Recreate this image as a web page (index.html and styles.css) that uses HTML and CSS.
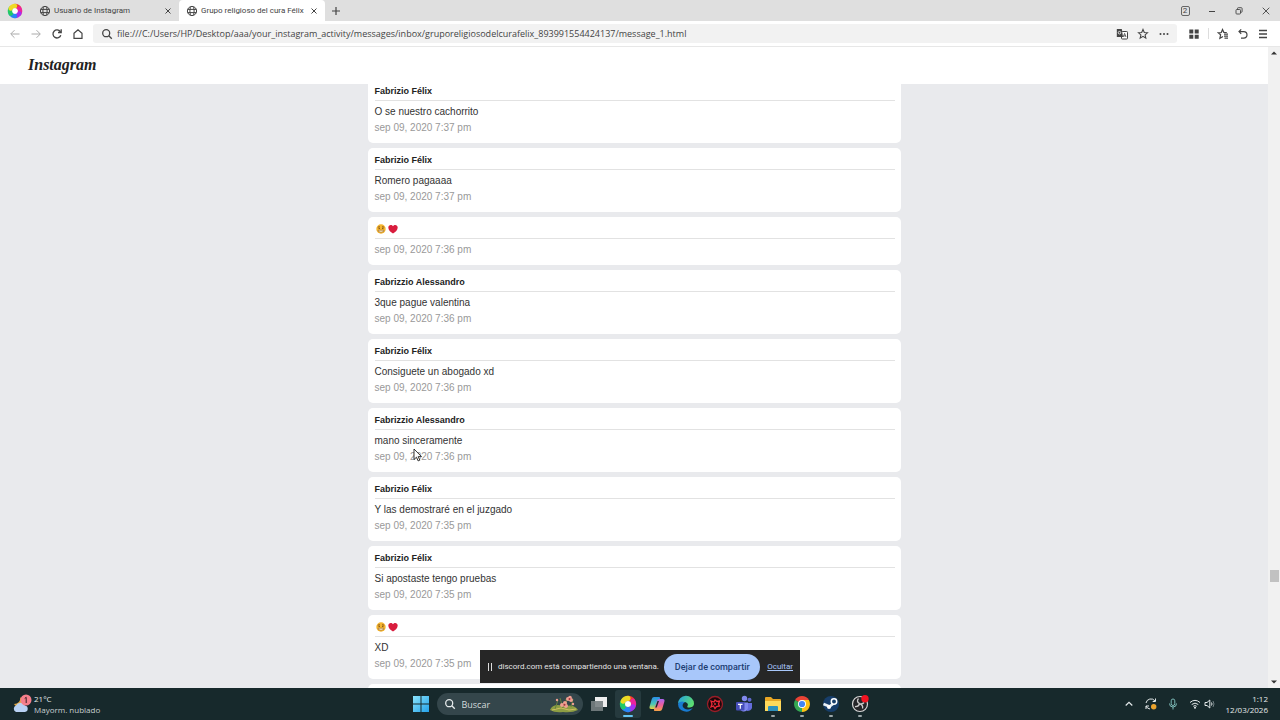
FILE: index.html
```html
<!DOCTYPE html>
<html lang="es">
<head>
<meta charset="utf-8">
<meta name="viewport" content="width=device-width, initial-scale=1">
<title>Grupo religioso del cura Félix</title>
<link rel="stylesheet" href="styles.css">
</head>
<body>
<svg class="defs" aria-hidden="true">
  <defs>
    <symbol id="globe" viewBox="0 0 12 12"><g fill="none" stroke="currentColor"><circle cx="6" cy="6" r="4.6"/><ellipse cx="6" cy="6" rx="2.1" ry="4.6"/><path d="M1.6 4.4h8.8M1.6 7.6h8.8"/></g></symbol>
    <symbol id="close" viewBox="0 0 12 12"><path d="M3.500 3.500l5 5M8.500 3.500l-5 5" stroke="currentColor" fill="none"/></symbol>
    <symbol id="search" viewBox="0 0 12 12"><g fill="none" stroke="currentColor" stroke-width="1.3"><circle cx="5.2" cy="5.2" r="3.5"/><path d="M7.8 7.8l3 3"/></g></symbol>
    <symbol id="swirl" viewBox="0 0 16 16">
      <g fill="none" stroke-width="4.500" stroke-linecap="round">
        <path d="M8 3a5 5 0 0 1 4.3 2.5" stroke="#f33a2e"/>
        <path d="M12.3 5.5a5 5 0 0 1 0 5" stroke="#ed249c"/>
        <path d="M12.3 10.5A5 5 0 0 1 8 13" stroke="#a42ff0"/>
        <path d="M8 13a5 5 0 0 1-4.3-2.5" stroke="#2987f5"/>
        <path d="M3.7 10.5a5 5 0 0 1 0-5" stroke="#22ca68"/>
        <path d="M3.7 5.5A5 5 0 0 1 8 3" stroke="#eedb25"/>
      </g>
      <circle cx="8" cy="8" r="2.700" fill="#fff"/>
    </symbol>
    <symbol id="face" viewBox="0 0 12 12"><circle cx="6" cy="6" r="4.7" fill="#f4b52f"/><path d="M2.8 4.2l2-.7M9.2 4.2l-2-.7" stroke="#835119" stroke-width=".8"/><circle cx="4.2" cy="5.3" r=".7" fill="#653c14"/><circle cx="7.8" cy="5.3" r=".7" fill="#653c14"/><path d="M3.200 7.200h5.600v1.100q-2.800 2-5.600 0z" fill="#fff4d8" stroke="#925c1b" stroke-width=".6"/></symbol>
    <symbol id="heart" viewBox="0 0 12 12"><path d="M6 10.500C3.500 9 1.300 7 1.300 4.500c0-3 3.500-3.400 4.700-1.300 1.200-2.100 4.700-1.700 4.700 1.300C10.700 7 8.500 9 6 10.500z" fill="#d91d3e"/></symbol>
  </defs>
</svg>

<header class="tabs">
  <svg class="i16 brand" role="img" aria-label="Navegador"><use href="#swirl"/></svg>
  <div class="tab">
    <svg class="i12"><use href="#globe"/></svg><span class="tab-title">Usuario de Instagram</span>
    <button class="icon" aria-label="Cerrar pestaña"><svg class="i12"><use href="#close"/></svg></button>
  </div>
  <div class="tab active">
    <svg class="i12"><use href="#globe"/></svg><span class="tab-title">Grupo religioso del cura Félix</span>
    <button class="icon" aria-label="Cerrar pestaña"><svg class="i12"><use href="#close"/></svg></button>
  </div>
  <button class="icon new-tab" aria-label="Nueva pestaña"><svg class="i12" viewBox="0 0 12 12"><path d="M6 2v8M2 6h8" stroke="currentColor" stroke-width="1.2"/></svg></button>
  <div class="window-controls">
    <button class="icon" aria-label="2 pestañas"><span class="count">2</span></button>
    <button class="icon" aria-label="Minimizar"><svg class="i12" viewBox="0 0 12 12"><path d="M3 6.500h6" stroke="currentColor"/></svg></button>
    <button class="icon" aria-label="Restaurar"><svg class="i12" viewBox="0 0 12 12"><g fill="none" stroke="currentColor" stroke-width=".9"><rect x="3" y="4.500" width="4.500" height="4.500" rx=".8"/><path d="M4.500 4.500V3.500q0-.8.8-.8h3q.8 0 .8.8v3q0 .8-.8.8h-.800"/></g></svg></button>
    <button class="icon" aria-label="Cerrar"><svg class="i12" viewBox="0 0 12 12"><path d="M2.700 2.700l6.600 6.600M9.300 2.700l-6.600 6.600" stroke="currentColor" stroke-width=".9"/></svg></button>
  </div>
</header>

<nav class="toolbar">
  <div class="nav-buttons">
    <button class="icon muted" aria-label="Atrás"><svg class="i12" viewBox="0 0 12 12"><path d="M10.500 6H2M5.500 2.200L1.700 6l3.800 3.800" fill="none" stroke="currentColor"/></svg></button>
    <button class="icon muted" aria-label="Adelante"><svg class="i12" viewBox="0 0 12 12"><path d="M1.500 6H10M6.500 2.200L10.300 6 6.500 9.800" fill="none" stroke="currentColor"/></svg></button>
    <button class="icon" aria-label="Recargar"><svg class="i12" viewBox="0 0 12 12"><path d="M9.800 7.200A4 4 0 1 1 9.300 3.700M10.200 1.300v3.200H7" fill="none" stroke="currentColor" stroke-width="1.300"/></svg></button>
    <button class="icon" aria-label="Inicio"><svg class="i12" viewBox="0 0 12 12"><path d="M2 5.300L6 1.800l4 3.500v5H2z" fill="none" stroke="currentColor" stroke-width="1.200"/></svg></button>
  </div>
  <div class="address">
    <svg class="i12"><use href="#search"/></svg>
    <input class="url" type="text" aria-label="Dirección" value="file:///C:/Users/HP/Desktop/aaa/your_instagram_activity/messages/inbox/gruporeligiosodelcurafelix_893991554424137/message_1.html">
    <button class="icon" aria-label="Traducir"><svg class="i12" viewBox="0 0 12 12"><rect x="5.500" y="3.500" width="6" height="7.500" rx=".8" fill="#fff" stroke="currentColor"/><path d="M.8 1h5l1.200 8H.8z" fill="currentColor"/><circle cx="3.500" cy="4.700" r="1.300" fill="none" stroke="#fff" stroke-width=".8"/><path d="M7.200 9l1.400-3.600L10 9M7.700 7.900h1.800" fill="none" stroke="currentColor" stroke-width=".8"/></svg></button>
    <button class="icon" aria-label="Favorito"><svg class="i12" viewBox="0 0 12 12"><path d="M6 1.500l1.300 3 3.200.3-2.400 2.100.7 3.200L6 8.400l-2.800 1.700.7-3.200-2.400-2.100 3.200-.3z" fill="none" stroke="currentColor" stroke-width="1.100"/></svg></button>
    <button class="icon" aria-label="Más"><svg class="i12" viewBox="0 0 12 12"><g fill="currentColor"><circle cx="2.500" cy="6" r="1"/><circle cx="6" cy="6" r="1"/><circle cx="9.500" cy="6" r="1"/></g></svg></button>
  </div>
  <div class="tools">
    <button class="icon" aria-label="Extensiones"><svg class="i12" viewBox="0 0 12 12"><path d="M1.300 1.500h4v4h-4zM6.700 1.500h4v4h-4zM1.300 6.700h4v4h-4zM6.700 6.700h4v4h-4z" fill="currentColor"/></svg></button>
    <span class="divider"></span>
    <button class="icon" aria-label="Marcadores"><svg class="i12" viewBox="0 0 12 12"><path d="M9.800 4.500L6.800 4.300 5.500 1.500 4.300 4.500l-3 .3 2.300 2-.7 3.400L6 8.400M7 6.200h4M7 8.200h4M7.500 10.200H11" fill="none" stroke="currentColor" stroke-width="1.200"/></svg></button>
    <button class="icon" aria-label="Deshacer"><svg class="i12" viewBox="0 0 12 12"><path d="M4.200 1.300L2 3.600l2.200 2.300M2 3.600h4.700a3.300 3.300 0 0 1 0 6.600H4" fill="none" stroke="currentColor" stroke-width="1.200"/></svg></button>
    <button class="icon" aria-label="Menú"><svg class="i12" viewBox="0 0 12 12"><path d="M2 2.500h8M2 6h8M2 9.500h8" stroke="currentColor" stroke-width="1.300"/></svg></button>
  </div>
</nav>

<div class="viewport">
  <div class="page">
    <div class="site-header"><span class="wordmark">Instagram</span></div>
    <main class="messages">
      <article class="card"><h2 class="sender">Fabrizio Félix</h2><p class="text">O se nuestro cachorrito</p><time class="date">sep 09, 2020 7:37 pm</time></article>
      <article class="card"><h2 class="sender">Fabrizio Félix</h2><p class="text">Romero pagaaaa</p><time class="date">sep 09, 2020 7:37 pm</time></article>
      <article class="card"><h2 class="sender emoji"><svg class="i12"><use href="#face"/></svg><svg class="i12"><use href="#heart"/></svg></h2><time class="date">sep 09, 2020 7:36 pm</time></article>
      <article class="card"><h2 class="sender">Fabrizzio Alessandro</h2><p class="text">3que pague valentina</p><time class="date">sep 09, 2020 7:36 pm</time></article>
      <article class="card"><h2 class="sender">Fabrizio Félix</h2><p class="text">Consiguete un abogado xd</p><time class="date">sep 09, 2020 7:36 pm</time></article>
      <article class="card"><h2 class="sender">Fabrizzio Alessandro</h2><p class="text">mano sinceramente</p><time class="date">sep 09, 2020 7:36 pm</time>
        <svg class="pointer" viewBox="0 0 10 14" aria-hidden="true"><path d="M1 1v10.500l2.500-2.300 1.600 3.700 1.700-.7-1.600-3.600h3.300z" fill="#fff" stroke="#222" stroke-width=".9"/></svg></article>
      <article class="card"><h2 class="sender">Fabrizio Félix</h2><p class="text">Y las demostraré en el juzgado</p><time class="date">sep 09, 2020 7:35 pm</time></article>
      <article class="card"><h2 class="sender">Fabrizio Félix</h2><p class="text">Si apostaste tengo pruebas</p><time class="date">sep 09, 2020 7:35 pm</time></article>
      <article class="card"><h2 class="sender emoji"><svg class="i12"><use href="#face"/></svg><svg class="i12"><use href="#heart"/></svg></h2><p class="text">XD</p><time class="date">sep 09, 2020 7:35 pm</time></article>
      <article class="card"></article>
    </main>
  </div>
  <div class="scrollbar" aria-hidden="true">
    <svg class="arrow" viewBox="0 0 8 8"><path d="M1 5.500L4 2.500l3 3z" fill="#333"/></svg>
    <div class="track"><div class="thumb"></div></div>
    <svg class="arrow" viewBox="0 0 8 8"><path d="M1 2.500l3 3 3-3z" fill="#333"/></svg>
  </div>
  <div class="share">
    <svg class="pause" viewBox="0 0 6 10"><path d="M1.500 1v8M4.500 1v8" stroke="#ddd"/></svg>
    <span>discord.com está compartiendo una ventana.</span>
    <button class="stop">Dejar de compartir</button>
    <a class="hide" href="#">Ocultar</a>
  </div>
</div>

<footer class="taskbar">
  <div class="weather">
    <svg class="weather-icon" viewBox="0 0 20 20"><path d="M8 3c1 4-2 7-6 7 2 4 10 4 11-1z" fill="#e3a640"/><path d="M4 18a3.500 3.500 0 0 1 0-6.500 5 5 0 0 1 9 0 3.300 3.300 0 0 1 0 6.500z" fill="#b9d2f4"/><circle cx="14" cy="6" r="5.500" fill="#f57f8b"/><path d="M12.700 4.500L14.200 3.300V9" fill="none" stroke="#3b2228"/></svg>
    <div class="weather-text"><span>21°C</span><span class="sub">Mayorm. nublado</span></div>
  </div>
  <div class="apps">
    <button class="app" aria-label="Inicio"><svg class="i18" viewBox="0 0 18 18"><defs><linearGradient id="win" x2="1" y2="1"><stop stop-color="#8be3fb"/><stop offset="1" stop-color="#24a2ea"/></linearGradient></defs><path d="M1 1h7.500v7.500H1zM9.500 1H17v7.500H9.500zM1 9.500h7.500V17H1zM9.500 9.500H17V17H9.500z" fill="url(#win)"/></svg></button>
    <label class="search"><svg class="i12"><use href="#search"/></svg><input class="search-input" type="text" placeholder="Buscar">
      <svg class="flowers" viewBox="0 0 30 18"><path d="M1 15q2-5 8-5l8 1q8-2 12 4-6 3-15 2-8 1-13-2z" fill="#8e9e43"/><path d="M3 15l9-2 8 2 7-1" stroke="#d0bd62" fill="none"/><path d="M6 14L9 5M14 13L11 3M22 12l2-8M18 13l-1-9" stroke="#66813e" fill="none"/><g fill="#f0a092"><circle cx="13" cy="10" r="2"/><circle cx="16" cy="8" r="2"/><circle cx="17" cy="11" r="2"/><circle cx="19" cy="4" r="2"/><circle cx="22" cy="5" r="2"/><circle cx="21" cy="2.500" r="1.800"/><circle cx="8" cy="5" r="1.200"/><circle cx="24" cy="9" r="1.200"/></g><g fill="#a6333b"><circle cx="15.500" cy="9.700" r="1"/><circle cx="20.500" cy="4" r="1"/></g></svg>
    </label>
    <button class="app" aria-label="Vista de tareas"><svg class="i18" viewBox="0 0 18 18"><rect x="5" y="2" width="12" height="10" fill="#eee"/><rect x="1" y="6" width="12" height="10" fill="#777f82" opacity=".9"/></svg></button>
    <button class="app current" aria-label="Navegador"><svg class="i18"><use href="#swirl"/></svg></button>
    <button class="app" aria-label="Copilot"><svg class="i18" viewBox="0 0 18 18"><defs><linearGradient id="coA" x2="0" y2="1"><stop stop-color="#2a8fe8"/><stop offset=".6" stop-color="#4bc8b5"/><stop offset="1" stop-color="#e8d23c"/></linearGradient><linearGradient id="coB" x2="0" y2="1"><stop stop-color="#a966f0"/><stop offset=".5" stop-color="#ee5d9b"/><stop offset="1" stop-color="#f5a445"/></linearGradient></defs><path d="M6 2h5q1.500 0 1 1.500L9 12q-.7 2-2.500 2H3.200Q1 14 1.600 11.500L3.800 4Q4.300 2 6 2z" fill="url(#coA)"/><path d="M11.500 4h3.300Q17 4 16.400 6.500L14.200 14q-.6 2-2.300 2H7q-1.500 0-1-1.500L9 6q.7-2 2.500-2z" fill="url(#coB)"/><path d="M9.500 6h1.500l-2.300 6.500H7.200z" fill="#17282c"/></svg></button>
    <button class="app" aria-label="Edge"><svg class="i18" viewBox="0 0 18 18"><defs><linearGradient id="edge" x2="1" y2=".4"><stop stop-color="#229de8"/><stop offset="1" stop-color="#5bdd73"/></linearGradient></defs><path d="M1 9a8 8 0 0 1 16-.5c0 3-2.500 4-5 4-1.500 0-2.200-.5-1.500-1.500C12 8.500 9 6.500 6 7 3.500 7.300 1.500 8 1 9z" fill="url(#edge)"/><path d="M1 9c1.500-3 5-3.300 7-1.500-4 1-3 7 3 7 2 0 3.500-.7 4.800-1.700A8 8 0 0 1 1 9z" fill="#187bd1"/></svg></button>
    <button class="app" aria-label="Riot"><svg class="i18" viewBox="0 0 18 18"><circle cx="9" cy="9" r="7.500" fill="#1b080b" stroke="#981e28" stroke-width="1.300"/><path d="M5 6l3 1 1-2 2 1.500L13.500 6l-1 3 1 2-3 .5L9 13.500 7.500 11 5 12l1-3z" fill="none" stroke="#ed2837" stroke-width="1.300"/><circle cx="9" cy="9" r="1" fill="#ed2837"/></svg></button>
    <button class="app" aria-label="Teams"><svg class="i18" viewBox="0 0 18 18"><circle cx="9.500" cy="3.500" r="2.700" fill="#8189ee"/><circle cx="14.500" cy="4.800" r="2" fill="#6068cd"/><path d="M12 8h5v5q-1 3-5 3z" fill="#656ddd"/><path d="M5 7.500h8V13q-1 4-5 3.500-3-.5-3-4z" fill="#8088ee"/><rect x="1" y="7" width="8.500" height="8.500" rx="1" fill="#464eb9"/><path d="M3 9.300h4.500M5.300 9.300v4.500" stroke="#fff" stroke-width="1.200"/></svg></button>
    <button class="app running" aria-label="Explorador"><svg class="i18" viewBox="0 0 18 18"><path d="M1 3q0-1 1-1h5l2 2h7q1 0 1 1v11H1z" fill="#e8a725"/><path d="M1 6h16v10H1z" fill="#ffd95b"/><path d="M4 16v-4q0-1 1-1h8q1 0 1 1v4z" fill="#2e91bd"/></svg></button>
    <button class="app running" aria-label="Chrome"><svg class="i18" viewBox="0 0 18 18"><path d="M9 9L2.100 5A8 8 0 0 1 15.900 5z" fill="#e94335"/><path d="M9 9L2.100 5A8 8 0 0 0 9 17l3.500-6z" fill="#35a853"/><path d="M9 9l0 8A8 8 0 0 0 15.900 5H9z" fill="#fbc116"/><circle cx="9" cy="9" r="4" fill="#fff"/><circle cx="9" cy="9" r="3.100" fill="#4285f4"/></svg></button>
    <button class="app running" aria-label="Steam"><svg class="i18" viewBox="0 0 18 18"><circle cx="9" cy="9" r="8" fill="#173e6b"/><path d="M1.500 9l6 2.500 4-3" stroke="#e8eef4" stroke-width="2.800" fill="none"/><circle cx="12" cy="6.500" r="2.700" fill="#173e6b" stroke="#fff" stroke-width="1.500"/><circle cx="7" cy="12" r="2" fill="#fff"/></svg></button>
    <button class="app running" aria-label="OBS"><svg class="i18" viewBox="0 0 18 18"><circle cx="9" cy="9" r="7.500" fill="#252528" stroke="#d7d7d7" stroke-width="1.200"/><path d="M7.500 3.500q-2.500 3 1 5 3 1 4.500-1M8.500 8.800q-1 3.200-4.500 2.700M8.500 8.800q4 1.200 3 4.700" fill="none" stroke="#ccc" stroke-width="1.300"/><circle cx="14" cy="3.700" r="3.700" fill="#f51422"/></svg></button>
  </div>
  <div class="tray">
    <svg class="i12" viewBox="0 0 12 12"><path d="M2.700 7.500L6 4.300l3.300 3.200" fill="none" stroke="currentColor" stroke-width="1.200"/></svg>
    <svg class="i12" viewBox="0 0 12 12"><path d="M1 5a5 5 0 0 1 9-2M10.500.5V3.500H7.700M1 8a5 5 0 0 0 4 3M1 11V8h3" fill="none" stroke="currentColor"/><circle cx="8.700" cy="8.700" r="2.700" fill="#eba32d"/></svg>
    <svg class="i12" viewBox="0 0 12 12"><g fill="none" stroke="#7dbbb8"><rect x="4.200" y="1" width="3.600" height="6.500" rx="1.800"/><path d="M2.500 5.500a3.500 3.500 0 0 0 7 0M6 9v2.500"/></g></svg>
    <span class="status">
      <svg class="i12" viewBox="0 0 12 12"><g fill="none" stroke="currentColor"><path d="M1 4.500q5-4.300 10 0M2.700 6.500q3.300-2.800 6.600 0M4.300 8.300q1.700-1.400 3.400 0"/></g><circle cx="6" cy="9.700" r="1" fill="currentColor"/></svg>
      <svg class="i12" viewBox="0 0 12 12"><path d="M1 4.500h2L5.800 2v8L3 7.500H1zM7.500 4.500q1 1.500 0 3" fill="none" stroke="currentColor"/><path d="M9 3q2 3 0 6" fill="none" stroke="#718083"/></svg>
    </span>
    <div class="clock"><span>1:12</span><span>12/03/2026</span></div>
  </div>
</footer>
</body>
</html>
```
FILE: styles.css
```css
* { box-sizing: border-box; }
body {
  margin: 0;
  height: 100vh;
  display: flex;
  flex-direction: column;
  overflow: hidden;
  font-family: "Open Sans", "Noto Sans", sans-serif;
  font-size: 8px;
  color: #444;
}
svg { display: block; flex: none; }
button, input { font: inherit; color: inherit; border: 0; background: none; padding: 0; margin: 0; }
.defs { position: absolute; width: 0; height: 0; }
.i12 { width: 12px; height: 12px; }
.i16 { width: 16px; height: 16px; }
.i18 { width: 18px; height: 18px; }
.icon { flex: none; display: flex; align-items: center; justify-content: center; min-width: 12px; }
.muted { color: #aaa; }

.tabs { flex: none; display: flex; height: 21px; background: #dfdfdf; align-items: stretch; }
.brand { margin: 3px 16px 0 7px; }
.tab { display: flex; align-items: center; width: 140px; padding-right: 5px; gap: 3px; color: #444; }
.tab-title { flex: 1; white-space: nowrap; }
.active { width: 146px; padding-left: 7px; background: #fff; border-radius: 4px 4px 0 0; }
.new-tab { margin-left: 5px; }
.window-controls { margin-left: auto; display: flex; gap: 15px; padding-right: 8px; }
.count { width: 9px; height: 10px; border: 1px solid #666; border-radius: 2px; line-height: 8px; }
.tabs, .share { font-family: Roboto, "Open Sans", sans-serif; }

.toolbar { flex: none; display: flex; align-items: center; height: 26px; background: #fff; border-bottom: 1px solid #e7e7e7; }
.nav-buttons { display: flex; gap: 9px; padding: 0 9px; }
.address { flex: 1; display: flex; align-items: center; gap: 9px; height: 19px; padding: 0 7px 0 8px; background: #f2f2f2; border-radius: 3px; }
.url { flex: 1; min-width: 0; margin-left: -5px; font-size: 9px; outline: 0; }
.tools { display: flex; align-items: center; gap: 8px; padding: 0 11px; }
.divider { width: 1px; height: 11px; background: #ddd; }

.viewport { flex: 1; min-height: 0; position: relative; display: flex; }
.page { flex: 1; min-width: 0; overflow: hidden; background: #e9eaed; }
.site-header { position: relative; z-index: 1; height: 37px; padding: 6px 28px; background: #fff; }
.wordmark { font: italic bold 16px/24px "Liberation Serif", serif; color: #222; }
.messages { display: flex; flex-direction: column; gap: 5px; width: 100%; max-width: 533px; margin: -5px auto 0; font-family: "Liberation Sans", Arial, sans-serif; font-size: 10px; line-height: 16px; }
.card { position: relative; flex: none; min-height: 48px; padding: 4px 6px 7px 7px; background: #fff; border-radius: 5px; }
.sender { margin: 0 0 3px; padding-bottom: 1px; border-bottom: 1px solid #e2e2e2; font-size: 9px; line-height: 16px; color: #222; }
.emoji { display: flex; align-items: center; height: 18px; }
.text { margin: 0; color: #333; }
.date { display: block; color: #999; }
.pointer { position: absolute; left: 45px; top: 40px; width: 10px; height: 14px; }

.scrollbar { flex: none; width: 12px; display: flex; flex-direction: column; align-items: center; padding: 2px 0; background: #f1f1f1; }
.arrow { width: 8px; height: 8px; }
.track { flex: 1; display: flex; flex-direction: column; justify-content: flex-end; padding-bottom: 96px; }
.thumb { width: 9px; height: 12px; background: #c1c1c1; }

.share { position: absolute; left: 50%; bottom: 5px; transform: translateX(-50%); display: flex; align-items: center; width: 320px; height: 33px; padding: 0 7px; background: #262626; color: #e3e3e3; white-space: nowrap; }
.pause { width: 6px; height: 10px; margin-right: 5px; }
.stop { flex: none; width: 96px; height: 26px; margin: 0 7px 0 auto; border-radius: 13px; background: #a8c7fa; color: #1d3e72; font-size: 9px; font-weight: 500; }
.hide { color: #a8c7fa; }

.taskbar { flex: none; display: grid; grid-template-columns: 1fr auto 1fr; align-items: center; height: 32px; padding: 0 12px; background: #17292c; color: #e5eaeb; line-height: 11px; }
.weather { display: flex; align-items: center; gap: 2px; }
.weather-icon { width: 20px; height: 20px; }
.weather-text { display: flex; flex-direction: column; }
.sub { color: #c8d0d2; }
.apps { display: flex; align-items: center; gap: 3px; }
.app { position: relative; display: flex; align-items: center; justify-content: center; width: 26px; height: 28px; border-radius: 3px; }
.current { background: #263a3e; }
.running::after, .current::after { content: ""; position: absolute; bottom: 1px; left: 50%; width: 4px; height: 2px; margin-left: -2px; border-radius: 1px; background: #9ca7aa; }
.current::after { width: 10px; margin-left: -5px; background: #64c5f2; }
.search { display: flex; align-items: center; gap: 6px; width: 146px; height: 22px; padding: 0 4px 0 7px; border-radius: 11px; background: #34464b; }
.search-input { flex: 1; min-width: 0; font-size: 9px; outline: 0; }
.search-input::placeholder { color: #d3dadb; opacity: 1; }
.flowers { width: 30px; height: 18px; }
.tray { display: flex; align-items: center; justify-content: flex-end; gap: 10px; }
.status { display: flex; gap: 3px; }
.clock { display: flex; flex-direction: column; align-items: flex-end; }
```
